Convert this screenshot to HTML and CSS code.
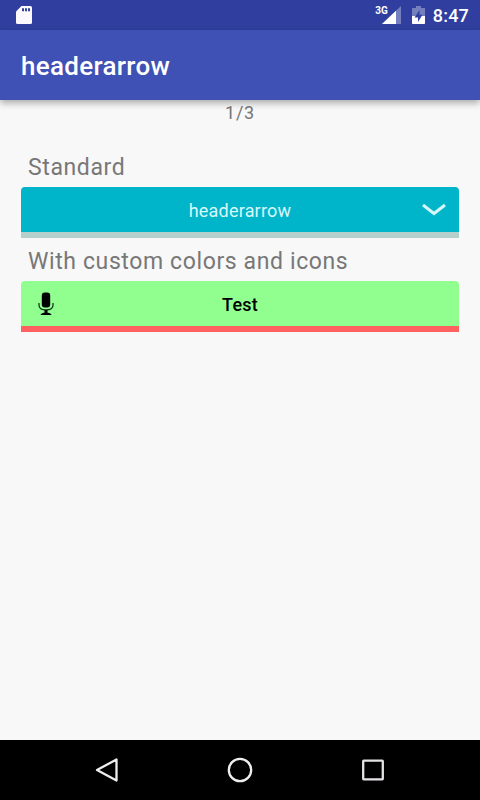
FILE: index.html
```
<!DOCTYPE html>
<html lang="en">
<head>
<meta charset="utf-8">
<title>headerarrow</title>
<link rel="stylesheet" href="styles.css">
</head>
<body>
<div class="screen">
  <div class="status">
    <svg class="sd" width="16" height="18" viewBox="0 0 16 18"><path d="M5.500 0H14.500Q16 0 16 1.500V16.500Q16 18 14.500 18H1.500Q0 18 0 16.500V5.500Z" fill="#fcfaff"/><path d="M6 2.300h2v3h-2zM9 2.300h2v3h-2zM12 2.300h2v3h-2z" fill="#30409f"/></svg>
    <div class="indicators">
      <span class="network">3G</span>
      <svg class="signal" width="19" height="18" viewBox="0 0 19 18"><path d="M0 18L19 0V18Z" fill="#747fbd"/><path d="M0 18L14 4.700V18Z" fill="#fff"/></svg>
      <svg class="battery" width="13" height="18" viewBox="0 0 13 18"><path d="M4 0h5v2h4v16H0V2h4z" fill="#747fbd"/><path d="M0 10h13v7q0 1-1 1H1q-1 0-1-1z" fill="#fff"/><path d="M7.500 4L2.500 11.500H6V16L10.500 8.700H7.500Z" fill="#30409f"/></svg>
      <span class="clock">8:47</span>
    </div>
  </div>
  <header class="appbar"><h1 class="title">headerarrow</h1></header>
  <main class="content">
    <div class="counter">1/3</div>
    <h2 class="label">Standard</h2>
    <div class="bar">
      <span class="caption">headerarrow</span>
      <svg class="chevron" width="24" height="14" viewBox="0 0 24 14"><path d="M1 2L12 10.500L23 2" fill="none" stroke="#d5f7fa" stroke-width="3"/></svg>
    </div>
    <h2 class="label">With custom colors and icons</h2>
    <div class="bar bar-custom">
      <svg class="mic" width="16" height="24" viewBox="0 0 16 24"><rect x="3.800" y="0.500" width="8.400" height="15" rx="3" fill="#000"/><path d="M1 11V13Q1 18 8 18Q15 18 15 13V11" fill="none" stroke="#123d12" stroke-width="1.300"/><path d="M6.500 18h3v3h-3z" fill="#000"/><path d="M2.500 23Q3 20.500 8 20.500T13.500 23Z" fill="#000"/></svg>
      <span class="caption">Test</span>
    </div>
  </main>
  <nav class="nav">
    <svg width="24" height="26" viewBox="0 0 24 26"><path d="M2 13L21.500 2.500V23.500Z" fill="none" stroke="#eee" stroke-width="2.300" stroke-linejoin="round"/></svg>
    <svg width="26" height="26" viewBox="0 0 26 26"><circle cx="13" cy="13" r="11.200" fill="none" stroke="#eee" stroke-width="2.300"/></svg>
    <svg width="24" height="24" viewBox="0 0 24 24"><rect x="2.200" y="2.700" width="19.600" height="18.600" rx="0.500" fill="none" stroke="#e5e2e5" stroke-width="2.300"/></svg>
  </nav>
</div>
</body>
</html>
```
FILE: styles.css
```
* { box-sizing: border-box; }
body { margin: 0; font-family: Roboto, "Liberation Sans", sans-serif; }
svg { display: block; flex: none; }
.screen { width: 480px; height: 800px; display: flex; flex-direction: column; background: #f8f8f8; overflow: hidden; }
.status { flex: none; height: 30px; padding: 0 11px 0 16px; display: flex; align-items: center; justify-content: space-between; background: #303f9f; color: #fff; }
.indicators { display: flex; align-items: center; }
.network { font-size: 10px; font-weight: 700; line-height: 12px; margin: -8px -6px 0 0; z-index: 1; }
.battery { margin: 0 8px 0 11px; }
.clock { font-size: 18px; font-weight: 500; line-height: 30px; padding-top: 1px; letter-spacing: .2px; }
.appbar { flex: none; height: 70px; padding: 0 21px; display: flex; align-items: center; background: #3f51b5; box-shadow: 0 3px 7px rgba(0, 0, 0, .32); z-index: 1; }
.title { margin: 2px 0 0; color: #fff; font-size: 26px; font-weight: 500; line-height: 36px; letter-spacing: .3px; }
.content { flex: 1; padding: 0 21px; }
.counter { height: 50px; padding-top: 3px; text-align: center; color: #777; font-size: 18px; line-height: 20px; letter-spacing: .8px; }
.label { margin: 0; height: 37px; padding: 2px 7px 0; color: #777; font-size: 23px; font-weight: 400; line-height: 32px; letter-spacing: .61px; white-space: nowrap; }
.bar { display: grid; grid-template-columns: 50px 1fr 50px; align-items: center; height: 51px; border-bottom: 6px solid #b5cfcd; border-radius: 4px 4px 0 0; background: #00b5ca; color: #d9f8fb; }
.bar + .label { height: 43px; padding-top: 8px; }
.bar-custom { background: #90ff90; border-bottom-color: #ff6060; color: #000; }
.caption { grid-column: 2; grid-row: 1; text-align: center; font-size: 18px; line-height: 24px; padding-top: 2px; letter-spacing: .2px; }
.bar-custom .caption { font-weight: 500; }
.chevron { grid-column: 3; justify-self: center; }
.mic { grid-column: 1; grid-row: 1; justify-self: center; }
.nav { flex: none; height: 60px; padding: 0 95px; display: flex; align-items: center; justify-content: space-between; background: #000; }
```
